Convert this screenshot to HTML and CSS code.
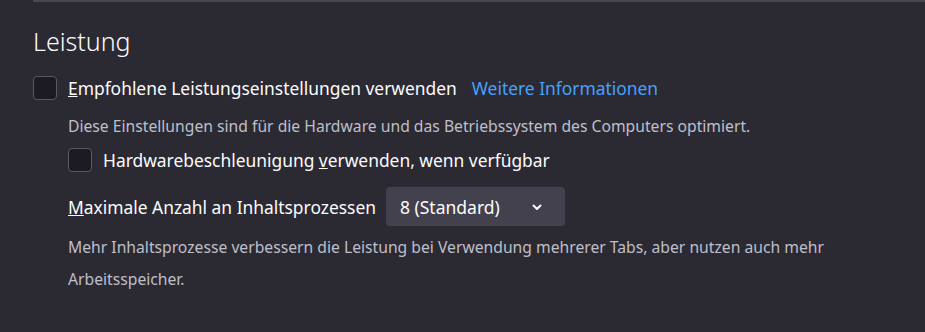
FILE: index.html
```html
<!DOCTYPE html>
<html lang="de">
<head>
    <meta charset="UTF-8">
    <meta name="viewport" content="width=device-width, initial-scale=1.0">
    <title>Leistung</title>
    <link rel="stylesheet" href="styles.css">
</head>
<body>

    <div class="pane">
        <div class="separator"></div>

        <h2 class="section-title">Leistung</h2>

        <div class="check-row">
            <span class="checkbox"></span>
            <span class="label"><u>E</u>mpfohlene Leistungseinstellungen verwenden</span>
            <a class="learn-more" href="#">Weitere Informationen</a>
        </div>

        <div class="indent">
            <p class="hint">Diese Einstellungen sind für die Hardware und das Betriebssystem des Computers optimiert.</p>

            <div class="check-row">
                <span class="checkbox"></span>
                <span class="label">Hardwarebeschleunigung <u>v</u>erwenden, wenn verfügbar</span>
            </div>

            <div class="select-row">
                <span class="label"><u>M</u>aximale Anzahl an Inhaltsprozessen</span>
                <div class="select">
                    <span>8 (Standard)</span>
                    <svg class="chevron" width="12" height="12" viewBox="0 0 12 12">
                        <path d="M2.5 4.5 L6 8 L9.5 4.5" fill="none" stroke="#fbfbfe" stroke-width="2" stroke-linecap="round" stroke-linejoin="round"/>
                    </svg>
                </div>
            </div>

            <p class="hint wide">Mehr Inhaltsprozesse verbessern die Leistung bei Verwendung mehrerer Tabs, aber nutzen auch mehr Arbeitsspeicher.</p>
        </div>
    </div>

</body>
</html>
```

FILE: styles.css
```css
/* Global */
body {
    margin: 0;
    background-color: #2b2a33;
    color: #fbfbfe;
    font-family: "Noto Sans", sans-serif;
    font-size: 15px;
}

.pane {
    padding-left: 33px;
    height: 332px;
    overflow: hidden;
}

.separator {
    height: 2px;
    background: #4a4950;
}

/* Heading */
.section-title {
    font-size: 25px;
    font-weight: 300;
    margin: 24px 0 0;
    line-height: 30px;
}

/* Checkbox rows */
.check-row {
    display: flex;
    align-items: center;
    gap: 11px;
    margin-top: 20px;
    height: 24px;
}

.checkbox {
    box-sizing: border-box;
    width: 24px;
    height: 24px;
    border: 1px solid #5b5a62;
    border-radius: 4px;
    background: #1c1b22;
}

.label {
    font-size: 17.4px;
}

.learn-more {
    color: #45a1ff;
    text-decoration: none;
    font-size: 17.4px;
    margin-left: 4px;
}

/* Indented block */
.indent {
    padding-left: 35px;
}

.indent .check-row {
    margin-top: 12px;
}

.hint {
    color: #bfbfc9;
    font-size: 15.7px;
    margin: 16px 0 0;
    line-height: 20px;
}

.hint.wide {
    line-height: 32px;
    margin-top: 5px;
    max-width: 780px;
}

/* Select */
.select-row {
    display: flex;
    align-items: center;
    gap: 10px;
    margin-top: 15px;
}

.select {
    box-sizing: border-box;
    display: flex;
    align-items: center;
    justify-content: space-between;
    width: 179px;
    height: 39px;
    padding: 0 22px 0 14px;
    background: #42414d;
    border-radius: 4px;
    font-size: 17.5px;
}
```
